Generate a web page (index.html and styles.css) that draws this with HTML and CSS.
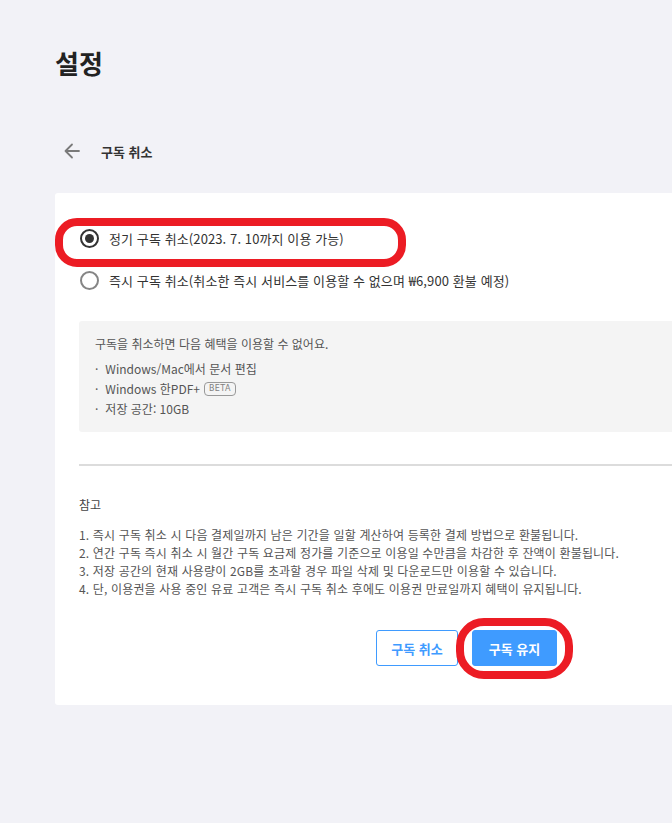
FILE: index.html
```html
<!DOCTYPE html>
<html lang="ko">
<head>
<meta charset="utf-8">
<link rel="stylesheet" href="styles.css">
</head>
<body>
<div class="page">
  <h1 class="title">설정</h1>
  <div class="back-row">
    <svg class="back-icon" width="20" height="20" viewBox="0 0 20 20"><path d="M17 10H3.5M10 3.5L3.5 10L10 16.5" fill="none" stroke="#7a7a7a" stroke-width="1.8" stroke-linecap="round" stroke-linejoin="round"/></svg>
    <span class="back-label">구독 취소</span>
  </div>
  <div class="card">
    <div class="options">
      <label class="option">
        <span class="radio checked"></span>
        <span class="option-text">정기 구독 취소(2023. 7. 10까지 이용 가능)</span>
      </label>
      <label class="option">
        <span class="radio"></span>
        <span class="option-text">즉시 구독 취소(취소한 즉시 서비스를 이용할 수 없으며 ₩6,900 환불 예정)</span>
      </label>
    </div>
    <div class="info-box">
      <p class="info-title">구독을 취소하면 다음 혜택을 이용할 수 없어요.</p>
      <ul class="info-list">
        <li>Windows/Mac에서 문서 편집</li>
        <li>Windows 한PDF+ <span class="badge">BETA</span></li>
        <li>저장 공간: 10GB</li>
      </ul>
    </div>
    <hr class="divider">
    <div class="notes">
      <p class="notes-title">참고</p>
      <ol class="notes-list">
        <li>1. 즉시 구독 취소 시 다음 결제일까지 남은 기간을 일할 계산하여 등록한 결제 방법으로 환불됩니다.</li>
        <li>2. 연간 구독 즉시 취소 시 월간 구독 요금제 정가를 기준으로 이용일 수만큼을 차감한 후 잔액이 환불됩니다.</li>
        <li>3. 저장 공간의 현재 사용량이 2GB를 초과할 경우 파일 삭제 및 다운로드만 이용할 수 있습니다.</li>
        <li>4. 단, 이용권을 사용 중인 유료 고객은 즉시 구독 취소 후에도 이용권 만료일까지 혜택이 유지됩니다.</li>
      </ol>
    </div>
    <div class="actions">
      <button class="btn btn-outline">구독 취소</button>
      <button class="btn btn-primary">구독 유지</button>
    </div>
  </div>
  <div class="mark mark-option"></div>
  <div class="mark mark-button"></div>
</div>
</body>
</html>
```

FILE: styles.css
```css
* { box-sizing: border-box; }
html, body {
  margin: 0;
  padding: 0;
  background: #f2f2f7;
  overflow: hidden;
}
body {
  font-family: "Noto Sans CJK KR", "Noto Sans", sans-serif;
  color: #333;
  width: 672px;
  height: 823px;
}
.page {
  position: relative;
  padding: 45px 0 0 55px;
}
.title {
  margin: 0;
  font-size: 26px;
  line-height: 36px;
  font-weight: 700;
  color: #222;
}
.back-row {
  display: flex;
  align-items: center;
  height: 30px;
  margin-top: 55px;
  padding-left: 7px;
}
.back-icon { display: block; }
.back-label {
  margin-left: 19px;
  font-size: 13px;
  font-weight: 700;
  color: #333;
}
.card {
  margin-top: 27px;
  width: 617px;
  background: #fff;
  border-radius: 3px 0 0 3px;
  padding: 24px 0 39px 24px;
}
.options {
  display: flex;
  flex-direction: column;
}
.option {
  display: flex;
  align-items: center;
  height: 42px;
}
.radio {
  width: 19px;
  height: 19px;
  border-radius: 50%;
  border: 2px solid #858585;
  margin-left: 1px;
  display: flex;
  align-items: center;
  justify-content: center;
  flex: none;
}
.radio.checked { border-color: #333; }
.radio.checked::after {
  content: "";
  width: 9px;
  height: 9px;
  border-radius: 50%;
  background: #333;
}
.option-text {
  margin-left: 10px;
  font-size: 13px;
  color: #333;
  letter-spacing: 0.1px;
}
.info-box {
  margin-top: 20px;
  background: #f4f4f4;
  border-radius: 3px 0 0 3px;
  padding: 13px 16px 13px;
  color: #555;
  font-size: 12px;
}
.info-title {
  margin: 0;
  line-height: 20px;
}
.info-list {
  list-style: none;
  margin: 5px 0 0;
  padding: 0;
}
.info-list li {
  line-height: 20px;
  display: flex;
  align-items: center;
}
.info-list li::before {
  content: "·";
  margin-right: 7px;
}
.badge {
  display: inline-flex;
  align-items: center;
  margin-left: 4px;
  height: 14px;
  padding: 0 4px;
  border: 1px solid #999;
  border-radius: 4px;
  font-size: 8px;
  font-weight: 400;
  letter-spacing: 0.4px;
  line-height: 1;
  color: #808080;
  font-family: "DejaVu Sans", sans-serif;
}
.divider {
  margin: 32px 0 0;
  border: 0;
  border-top: 2px solid #dcdcdc;
}
.notes {
  margin-top: 29px;
  color: #555;
}
.notes-title {
  margin: 0;
  font-size: 12px;
  line-height: 20px;
  color: #444;
}
.notes-list {
  list-style: none;
  margin: 11px 0 0;
  padding: 0;
  font-size: 12px;
  line-height: 18px;
  letter-spacing: 0.15px;
}
.actions {
  margin-top: 32px;
  padding-left: 297px;
  display: flex;
  gap: 14px;
}
.btn {
  height: 36px;
  padding: 0;
  border-radius: 3px;
  font-family: inherit;
  font-size: 13px;
  font-weight: 700;
  white-space: nowrap;
  cursor: pointer;
}
.btn-outline {
  width: 82px;
  background: #fff;
  border: 1px solid #3f9bff;
  color: #3f9bff;
}
.btn-primary {
  width: 85px;
  background: #3f9bff;
  border: 1px solid #3f9bff;
  color: #fff;
}
.mark {
  position: absolute;
  border: 8px solid #ec1c24;
  pointer-events: none;
}
.mark-option {
  left: 55px;
  top: 218px;
  width: 351px;
  height: 49px;
  border-radius: 22px;
}
.mark-button {
  left: 456px;
  top: 618px;
  width: 117px;
  height: 61px;
  border-radius: 28px;
}
```
